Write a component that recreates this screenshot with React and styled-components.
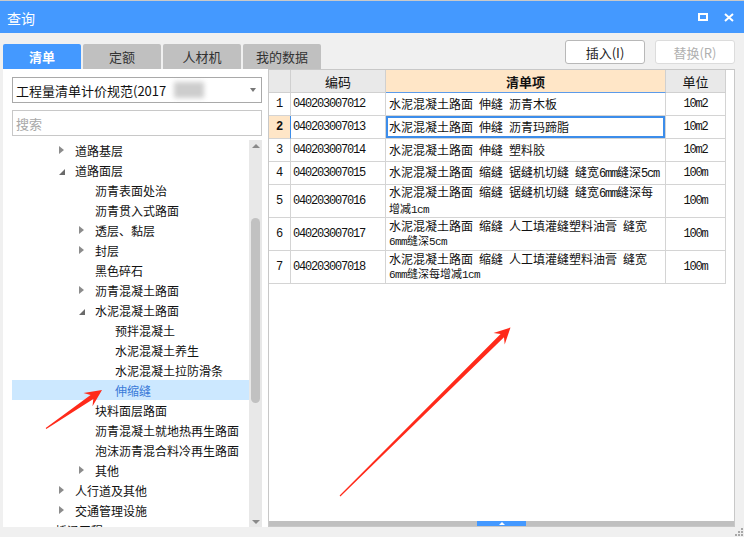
import React from "react";
import styled, { createGlobalStyle } from "styled-components";

const CJK = `"Noto Sans CJK SC", "Microsoft YaHei", sans-serif`;
const MONO = `"Liberation Mono", "Noto Sans CJK SC", monospace`;

const Global = createGlobalStyle`
  html, body { margin: 0; padding: 0; background: #f0f0f0; overflow: hidden; }
  #root { width: 744px; height: 537px; }
  *, *::before, *::after { box-sizing: border-box; }
`;

const Window = styled.div`
  position: relative;
  width: 744px;
  height: 537px;
  display: flex;
  flex-direction: column;
  background: #f0f0f0;
  font-family: ${CJK};
  overflow: hidden;
`;

const TitleBar = styled.div`
  height: 33px;
  flex: none;
  background: #4499ff;
  border-top: 1px solid #c9c9c9;
  display: flex;
  align-items: center;
  padding: 0 10px 0 7px;
  color: #fff;
`;

const Title = styled.div`
  flex: 1;
  font-size: 14px;
  padding-top: 2px;
`;

const TitleIcons = styled.div`
  display: flex;
  align-items: center;
  gap: 16px;
`;

const Toolbar = styled.div`
  height: 36px;
  flex: none;
  display: flex;
  align-items: flex-start;
  padding: 0 9px 0 3px;
`;

const Tabs = styled.div`
  display: flex;
  gap: 2px;
  align-self: flex-end;
`;

const Tab = styled.div`
  width: 78px;
  height: 25px;
  border-radius: 2px 2px 0 0;
  background: ${(p) => (p.$active ? "#4499ff" : "#c0c0c0")};
  color: ${(p) => (p.$active ? "#fff" : "#333")};
  font-weight: ${(p) => (p.$active ? 700 : 400)};
  font-size: 13px;
  display: flex;
  align-items: center;
  justify-content: center;
`;

const Spacer = styled.div`
  flex: 1;
`;

const Actions = styled.div`
  display: flex;
  gap: 10px;
  margin-top: 7px;
`;

const ActionButton = styled.button`
  width: 80px;
  height: 24px;
  background: #fff;
  border: 1px solid ${(p) => (p.disabled ? "#dcdcdc" : "#b8b8b8")};
  border-radius: 3px;
  color: ${(p) => (p.disabled ? "#b0b0b0" : "#222")};
  font-family: ${CJK};
  font-size: 13px;
  padding: 0;
`;

const Main = styled.div`
  height: 458px;
  flex: none;
  display: flex;
  padding: 0 9px 0 3px;
`;

const LeftPanel = styled.div`
  width: 265px;
  flex: none;
  background: #fff;
  display: flex;
  flex-direction: column;
  padding: 8px 6px 0 9px;
`;

const Dropdown = styled.div`
  height: 26px;
  flex: none;
  border: 1px solid #a9a9a9;
  display: flex;
  align-items: center;
  padding-left: 3px;
  font-size: 13px;
  color: #111;
`;

const Blurred = styled.span`
  display: inline-block;
  width: 30px;
  height: 16px;
  margin-left: 8px;
  background: #cdcdcd;
  filter: blur(2.5px);
`;

const Caret = styled.span`
  margin-left: auto;
  margin-right: 5px;
  width: 0;
  height: 0;
  border-left: 3.5px solid transparent;
  border-right: 3.5px solid transparent;
  border-top: 4px solid #777;
`;

const SearchInput = styled.input`
  margin-top: 7px;
  height: 26px;
  flex: none;
  border: 1px solid #c8c8c8;
  padding: 0 3px;
  font-family: ${CJK};
  font-size: 13px;
  outline: none;
  &::placeholder { color: #a8a8a8; }
`;

const TreeWrap = styled.div`
  margin-top: 4px;
  flex: 1;
  min-height: 0;
  display: flex;
  overflow: hidden;
`;

const TreeList = styled.div`
  flex: 1;
  overflow: hidden;
`;

const TreeRow = styled.div`
  height: 20px;
  display: flex;
  align-items: center;
  padding-left: ${(p) => 27 + 20 * p.$level}px;
  font-size: 12px;
  white-space: nowrap;
  background: ${(p) => (p.$selected ? "#cce8ff" : "transparent")};
  color: ${(p) => (p.$selected ? "#3a7ad8" : "#111")};
`;

const Expander = styled.span`
  width: 16px;
  flex: none;
  height: 20px;
  display: flex;
  align-items: center;
`;

const Collapsed = styled.span`
  width: 0;
  height: 0;
  border-top: 4px solid transparent;
  border-bottom: 4px solid transparent;
  border-left: 5px solid #8c8c8c;
`;

const Expanded = styled.span`
  width: 0;
  height: 0;
  margin-top: 3px;
  border-left: 6px solid transparent;
  border-bottom: 6px solid #6a6a6a;
`;

const VScroll = styled.div`
  width: 13px;
  flex: none;
  background: #e8e8e8;
  display: flex;
  flex-direction: column;
  align-items: center;
`;

const UpArrow = styled.span`
  margin-top: 4px;
  width: 0;
  height: 0;
  border-left: 4px solid transparent;
  border-right: 4px solid transparent;
  border-bottom: 4px solid #8a8a8a;
`;

const Thumb = styled.div`
  margin-top: 70px;
  width: 9px;
  height: 185px;
  border-radius: 5px;
  background: #c1c1c1;
`;

const DownArrow = styled.span`
  margin-top: auto;
  margin-bottom: 3px;
  width: 0;
  height: 0;
  border-left: 4px solid transparent;
  border-right: 4px solid transparent;
  border-top: 4px solid #8a8a8a;
`;

const RightPanel = styled.div`
  flex: 1;
  background: #fff;
  border: 1px solid #c8c8c8;
  display: flex;
  flex-direction: column;
`;

const GridRow = styled.div`
  display: grid;
  grid-template-columns: 22px 95px 280px 60px;
  height: ${(p) => p.$h}px;
  flex: none;
`;

const Cell = styled.div`
  border-right: 1px solid ${(p) => (p.$mark ? "#3c8dea" : "#d4d4d4")};
  border-bottom: 1px solid #d4d4d4;
  display: flex;
  align-items: center;
  justify-content: ${(p) => (p.$center ? "center" : "flex-start")};
  padding-left: ${(p) => (p.$center ? 0 : 2)}px;
  background: ${(p) => p.$bg || "#fff"};
  color: #111;
  overflow: hidden;
`;

const HeadCell = styled(Cell)`
  font-size: 13px;
  font-weight: ${(p) => (p.$bold ? 700 : 400)};
  background: ${(p) => (p.$active ? "#ffe6c7" : "#e9e9e9")};
  border-bottom-color: ${(p) => (p.$active ? "#5b9bea" : "#d0d0d0")};
  border-right-color: #d0d0d0;
`;

const RowNum = styled(Cell)`
  font-family: ${MONO};
  font-size: 12px;
  font-weight: ${(p) => (p.$sel ? 700 : 400)};
`;

const ItemCell = styled(Cell)`
  flex-direction: column;
  align-items: flex-start;
  justify-content: center;
  padding-left: 3px;
  box-shadow: ${(p) => (p.$focus ? "inset 0 0 0 2px #3c8dea" : "none")};
`;

const Line = styled.div`
  font-size: ${(p) => (p.$small ? 11 : 12)}px;
  line-height: 14px;
  white-space: pre;
`;

const Latin = styled.span`
  font-family: ${MONO};
  font-size: ${(p) => (p.$small ? 11 : 12)}px;
  letter-spacing: ${(p) => (p.$small ? -0.6 : -1.2)}px;
`;

const Blank = styled.div`
  flex: 1;
`;

const HScroll = styled.div`
  height: 5px;
  flex: none;
  background: #c0c0c0;
  display: flex;
  padding-left: 208px;
`;

const HThumb = styled.div`
  width: 49px;
  height: 5px;
  background: #4499ff;
  display: flex;
  justify-content: center;
  align-items: center;
`;

const HThumbArrow = styled.span`
  width: 0;
  height: 0;
  border-left: 3px solid transparent;
  border-right: 3px solid transparent;
  border-bottom: 3px solid #fff;
`;

const Footer = styled.div`
  height: 10px;
  flex: none;
  display: flex;
  justify-content: flex-end;
  align-items: flex-end;
  padding: 0 1px 1px 0;
`;

const Overlay = styled.svg`
  position: absolute;
  left: 0;
  top: 0;
  pointer-events: none;
`;

const tree = [
  { l: 1, e: "c", t: "道路基层" },
  { l: 1, e: "o", t: "道路面层" },
  { l: 2, t: "沥青表面处治" },
  { l: 2, t: "沥青贯入式路面" },
  { l: 2, e: "c", t: "透层、黏层" },
  { l: 2, e: "c", t: "封层" },
  { l: 2, t: "黑色碎石" },
  { l: 2, e: "c", t: "沥青混凝土路面" },
  { l: 2, e: "o", t: "水泥混凝土路面" },
  { l: 3, t: "预拌混凝土" },
  { l: 3, t: "水泥混凝土养生" },
  { l: 3, t: "水泥混凝土拉防滑条" },
  { l: 3, t: "伸缩缝", s: true },
  { l: 2, t: "块料面层路面" },
  { l: 2, t: "沥青混凝土就地热再生路面" },
  { l: 2, t: "泡沫沥青混合料冷再生路面" },
  { l: 2, e: "c", t: "其他" },
  { l: 1, e: "c", t: "人行道及其他" },
  { l: 1, e: "c", t: "交通管理设施" },
  { l: 0, t: "桥涵工程" },
];

const S = "\u2002";
const rows = [
  { code: "040203007012", lines: [`水泥混凝土路面${S}伸缝${S}沥青木板`], unit: "10m2" },
  { code: "040203007013", lines: [`水泥混凝土路面${S}伸缝${S}沥青玛蹄脂`], unit: "10m2", sel: true },
  { code: "040203007014", lines: [`水泥混凝土路面${S}伸缝${S}塑料胶`], unit: "10m2" },
  { code: "040203007015", lines: [`水泥混凝土路面${S}缩缝${S}锯缝机切缝${S}缝宽6mm缝深5cm`], unit: "100m" },
  { code: "040203007016", lines: [`水泥混凝土路面${S}缩缝${S}锯缝机切缝${S}缝宽6mm缝深每`, "增减1cm"], unit: "100m" },
  { code: "040203007017", lines: [`水泥混凝土路面${S}缩缝${S}人工填灌缝塑料油膏${S}缝宽`, "6mm缝深5cm"], unit: "100m" },
  { code: "040203007018", lines: [`水泥混凝土路面${S}缩缝${S}人工填灌缝塑料油膏${S}缝宽`, "6mm缝深每增减1cm"], unit: "100m" },
];

function mixed(text, small) {
  return text.split(/([A-Za-z0-9]+)/).map((part, i) =>
    /^[A-Za-z0-9]+$/.test(part) ? (
      <Latin key={i} $small={small}>{part}</Latin>
    ) : (
      part
    )
  );
}

function arrowPoints(tx, ty, hx, hy, head = 16, wing = 8, shaft = 2.4, tail = 0.6) {
  const dx = hx - tx, dy = hy - ty;
  const len = Math.hypot(dx, dy);
  const ux = dx / len, uy = dy / len;
  const nx = -uy, ny = ux;
  const bx = hx - ux * head, by = hy - uy * head;
  const sx = hx - ux * head * 0.72, sy = hy - uy * head * 0.72;
  const pts = [
    [tx + nx * tail, ty + ny * tail],
    [sx + nx * shaft, sy + ny * shaft],
    [bx + nx * wing, by + ny * wing],
    [hx, hy],
    [bx - nx * wing, by - ny * wing],
    [sx - nx * shaft, sy - ny * shaft],
    [tx - nx * tail, ty - ny * tail],
  ];
  return pts.map((p) => p.map((v) => v.toFixed(1)).join(",")).join(" ");
}

export default function App() {
  return (
    <Window>
      <Global />
      <TitleBar>
        <Title>查询</Title>
        <TitleIcons>
          <svg width="10" height="8" viewBox="0 0 10 8">
            <rect x="1" y="1" width="8" height="6" fill="none" stroke="#fff" strokeWidth="2" />
          </svg>
          <svg width="10" height="9" viewBox="0 0 10 9">
            <path d="M1 1 L9 8 M9 1 L1 8" stroke="#fff" strokeWidth="2" />
          </svg>
        </TitleIcons>
      </TitleBar>

      <Toolbar>
        <Tabs>
          <Tab $active>清单</Tab>
          <Tab>定额</Tab>
          <Tab>人材机</Tab>
          <Tab>我的数据</Tab>
        </Tabs>
        <Spacer />
        <Actions>
          <ActionButton>插入(I)</ActionButton>
          <ActionButton disabled>替换(R)</ActionButton>
        </Actions>
      </Toolbar>

      <Main>
        <LeftPanel>
          <Dropdown>
            工程量清单计价规范(2017
            <Blurred />
            <Caret />
          </Dropdown>
          <SearchInput placeholder="搜索" />
          <TreeWrap>
            <TreeList>
              {tree.map((n, i) => (
                <TreeRow key={i} $level={n.l} $selected={n.s}>
                  <Expander>
                    {n.e === "c" && <Collapsed />}
                    {n.e === "o" && <Expanded />}
                  </Expander>
                  {n.t}
                </TreeRow>
              ))}
            </TreeList>
            <VScroll>
              <UpArrow />
              <Thumb />
              <DownArrow />
            </VScroll>
          </TreeWrap>
        </LeftPanel>

        <RightPanel>
          <GridRow $h={23}>
            <HeadCell />
            <HeadCell $center>编码</HeadCell>
            <HeadCell $center $bold $active>清单项</HeadCell>
            <HeadCell $center>单位</HeadCell>
          </GridRow>
          {rows.map((r, i) => (
            <GridRow key={r.code} $h={r.lines.length > 1 ? 33 : 23}>
              <RowNum $center $sel={r.sel} $mark={r.sel} $bg={r.sel ? "#ffe6c7" : undefined}>
                {i + 1}
              </RowNum>
              <Cell>
                <Latin>{r.code}</Latin>
              </Cell>
              <ItemCell $focus={r.sel}>
                {r.lines.map((ln, j) => (
                  <Line key={j} $small={j > 0}>
                    {mixed(ln, j > 0)}
                  </Line>
                ))}
              </ItemCell>
              <Cell $center>
                <Latin>{r.unit}</Latin>
              </Cell>
            </GridRow>
          ))}
          <Blank />
          <HScroll>
            <HThumb>
              <HThumbArrow />
            </HThumb>
          </HScroll>
        </RightPanel>
      </Main>

      <Footer>
        <svg width="8" height="8" viewBox="0 0 8 8">
          {[[6, 0], [3, 3], [6, 3], [0, 6], [3, 6], [6, 6]].map(([x, y], i) => (
            <rect key={i} x={x} y={y} width="2" height="2" fill="#a8a8a8" />
          ))}
        </svg>
      </Footer>

      <Overlay width="744" height="537" viewBox="0 0 744 537">
        <polygon points={arrowPoints(46, 428.5, 102, 390, 17, 8)} fill="#ff2a1a" />
        <polygon points={arrowPoints(340, 496, 510.5, 327.5, 16, 8)} fill="#ff2a1a" />
      </Overlay>
    </Window>
  );
}
